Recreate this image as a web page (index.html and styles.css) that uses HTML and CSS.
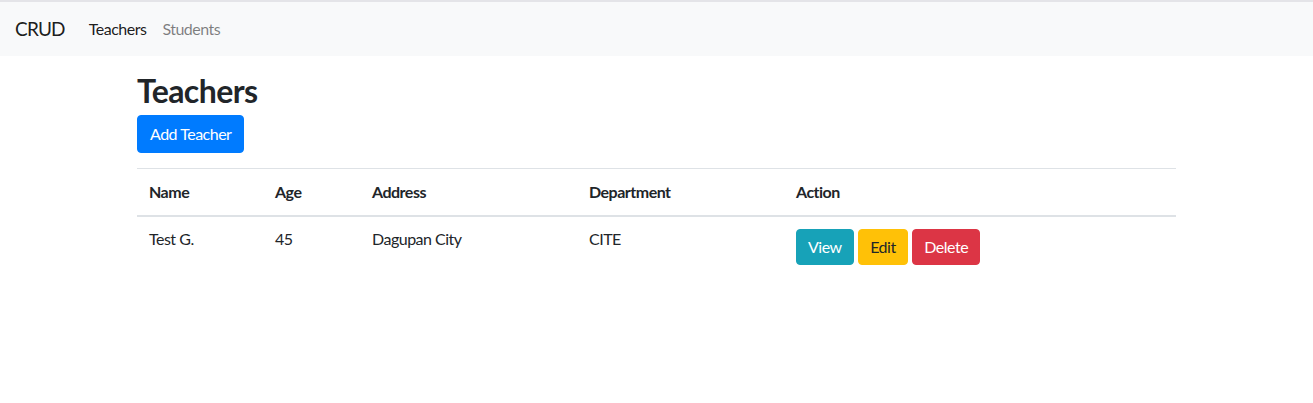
FILE: index.html
```html
<!DOCTYPE html>
<html lang="en">
<head>
<meta charset="utf-8">
<title>CRUD</title>
<link rel="stylesheet" href="styles.css">
</head>
<body>
<nav class="navbar">
  <a class="brand" href="#">CRUD</a>
  <ul class="nav">
    <li><a class="nav-link active" href="#">Teachers</a></li>
    <li><a class="nav-link" href="#">Students</a></li>
  </ul>
</nav>
<main class="container">
  <h2 class="title">Teachers</h2>
  <a class="btn btn-primary" href="#">Add Teacher</a>
  <table class="table">
    <thead>
      <tr>
        <th class="c-name">Name</th>
        <th class="c-age">Age</th>
        <th class="c-addr">Address</th>
        <th class="c-dept">Department</th>
        <th>Action</th>
      </tr>
    </thead>
    <tbody>
      <tr>
        <td>Test G.</td>
        <td>45</td>
        <td>Dagupan City</td>
        <td>CITE</td>
        <td class="actions">
          <a class="btn btn-info" href="#">View</a>
          <a class="btn btn-warning" href="#">Edit</a>
          <a class="btn btn-danger" href="#">Delete</a>
        </td>
      </tr>
    </tbody>
  </table>
</main>
</body>
</html>
```
FILE: styles.css
```css
* { box-sizing: border-box; }
html, body { margin: 0; padding: 0; }
body {
  font-family: Lato, "Noto Sans", sans-serif;
  font-size: 16px;
  line-height: 22px;
  letter-spacing: -0.5px;
  color: #212529;
  background: #fff;
  border-top: 2px solid #e4e4e8;
}
a { text-decoration: none; }
.navbar {
  display: flex;
  align-items: center;
  background: #f8f9fa;
  padding: 8px 16px 8px 15px;
  height: 54px;
}
.brand {
  font-size: 19px;
  letter-spacing: -0.8px;
  color: rgba(0,0,0,.9);
  margin-right: 16px;
  line-height: 30px;
}
.nav {
  display: flex;
  list-style: none;
  margin: 0;
  padding: 0;
}
.nav-link {
  display: block;
  padding: 8px 8px;
  color: rgba(0,0,0,.5);
}
.nav-link.active { color: rgba(0,0,0,.9); }
.container {
  width: 1039px;
  margin: 0 auto;
  padding-top: 16px;
}
.title {
  font-size: 32px;
  font-weight: 700;
  letter-spacing: -0.6px;
  line-height: 38px;
  margin: 0 0 5px 0;
}
.btn {
  display: inline-block;
  padding: 7px 12px;
  font-size: 16px;
  line-height: 22px;
  border: 1px solid transparent;
  border-radius: 4px;
  color: #fff;
  vertical-align: middle;
}
.btn-primary { background: #007bff; border-color: #007bff; }
.btn-info { background: #17a2b8; border-color: #17a2b8; }
.btn-warning { background: #ffc107; border-color: #ffc107; color: #212529; }
.btn-danger { background: #dc3545; border-color: #dc3545; }
.actions .btn { padding: 6px 11px; margin-right: 1px; }
.table {
  width: 100%;
  border-collapse: collapse;
  margin-top: 15px;
}
.table th, .table td {
  padding: 12px;
  text-align: left;
  vertical-align: top;
  border-top: 1px solid #dee2e6;
}
.table th { font-weight: 700; }
.table thead th { border-bottom: 2px solid #dee2e6; vertical-align: bottom; }
.table tbody td { padding-top: 11px; }
.table tbody td.actions { padding-top: 12px; }
.c-name { width: 126px; }
.c-age { width: 97px; }
.c-addr { width: 217px; }
.c-dept { width: 207px; }
```
